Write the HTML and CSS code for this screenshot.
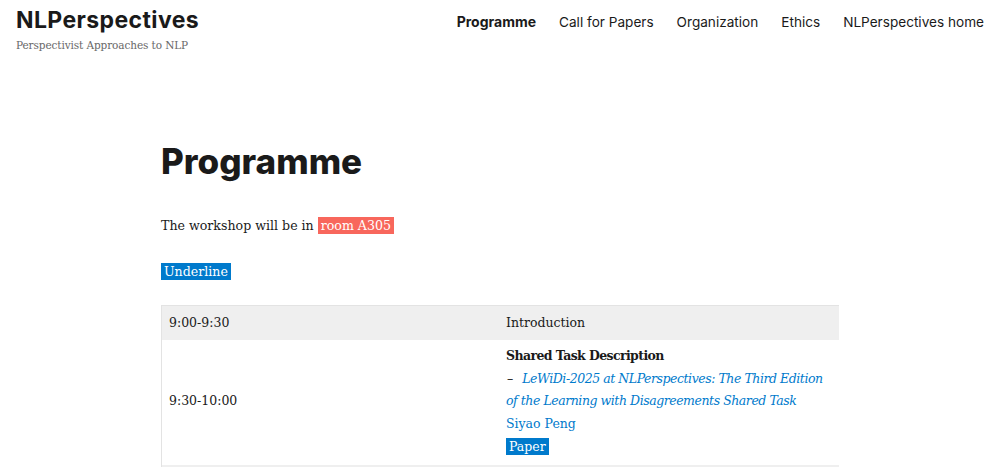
FILE: index.html
```html
<!DOCTYPE html>
<html lang="en">
<head>
<meta charset="utf-8">
<title>Programme – NLPerspectives</title>
<link rel="stylesheet" href="styles.css">
</head>
<body>
<header class="site-header">
  <div class="branding">
    <div class="site-title">NLPerspectives</div>
    <div class="site-desc">Perspectivist Approaches to NLP</div>
  </div>
  <nav class="main-nav">
    <a class="nav-item current" href="#">Programme</a>
    <a class="nav-item" href="#">Call for Papers</a>
    <a class="nav-item" href="#">Organization</a>
    <a class="nav-item" href="#">Ethics</a>
    <a class="nav-item" href="#">NLPerspectives home</a>
  </nav>
</header>
<main class="content">
  <h1 class="page-title">Programme</h1>
  <p class="intro first">The workshop will be in <span class="tag tag-red">room A305</span></p>
  <p class="intro"><a class="tag tag-blue" href="#">Underline</a></p>
  <table class="schedule">
    <tr class="row-gray">
      <td class="time">9:00-9:30</td>
      <td class="event">Introduction</td>
    </tr>
    <tr class="row-white">
      <td class="time">9:30-10:00</td>
      <td class="event">
        <strong>Shared Task Description</strong><br>
        <span class="dash">–</span><a class="paper-title" href="#">LeWiDi-2025 at NLPerspectives: The Third Edition of the Learning with Disagreements Shared Task</a><br>
        <a class="author" href="#">Siyao Peng</a><br>
        <a class="tag tag-blue" href="#">Paper</a>
      </td>
    </tr>
    <tr class="row-gray">
      <td class="time">10:00-10:30</td>
      <td class="event">Keynote</td>
    </tr>
  </table>
</main>
</body>
</html>
```
FILE: styles.css
```css
html, body {
  margin: 0;
  padding: 0;
  background: #fff;
}
body {
  font-family: "DejaVu Serif", serif;
  color: #1a1a1a;
}
a { text-decoration: none; }

.site-header {
  display: flex;
  justify-content: space-between;
  align-items: flex-start;
  padding: 0 16px;
  height: 130px;
}
.branding { padding-top: 6px; }
.site-title {
  font-family: Inter, "Noto Sans", sans-serif;
  font-weight: 700;
  font-size: 23px;
  line-height: 28px;
  color: #1a1a1a;
  letter-spacing: 0.4px;
}
.site-desc {
  font-family: "DejaVu Serif", serif;
  font-size: 10.5px;
  line-height: 18px;
  margin-top: 2px;
  color: #686868;
  letter-spacing: -0.1px;
}
.main-nav {
  display: flex;
  gap: 23px;
  padding-top: 13px;
}
.nav-item {
  font-family: Inter, "Noto Sans", sans-serif;
  font-size: 13.6px;
  line-height: 18px;
  color: #1a1a1a;
}
.nav-item.current { font-weight: 700; font-size: 14px; }

.content {
  width: 678px;
  margin: 0 auto;
}
.page-title {
  font-family: Inter, "Noto Sans", sans-serif;
  font-weight: 800;
  font-size: 35px;
  line-height: 44px;
  margin: 9px 0 0;
  color: #1a1a1a;
}
.intro {
  font-size: 12.6px;
  line-height: 20px;
  margin: 26px 0 0;
}
.intro.first { margin-top: 33px; }
.tag {
  color: #fff;
  padding: 1px 3px;
}
.tag-red { background: #f8675c; }
.tag-blue { background: #007acc; }

.schedule {
  margin-top: 23px;
  width: 678px;
  table-layout: fixed;
  border-collapse: collapse;
  border-top: 1px solid #e3e3e3;
  border-left: 1px solid #e3e3e3;
  font-size: 12.5px;
  line-height: 22.75px;
}
.schedule td {
  padding: 5.5px 7px;
  vertical-align: middle;
  text-align: left;
}
.schedule td.time { width: 323px; }
.row-gray td { background: #efefef; }
.row-white td { background: #fff; padding-top: 5px; padding-bottom: 6px; }
.event strong { letter-spacing: -0.6px; }
.dash { display: inline-block; padding-left: 1px; margin-right: 9px; }
.paper-title { font-style: italic; color: #007acc; letter-spacing: -0.45px; }
.author { color: #007acc; }
```
